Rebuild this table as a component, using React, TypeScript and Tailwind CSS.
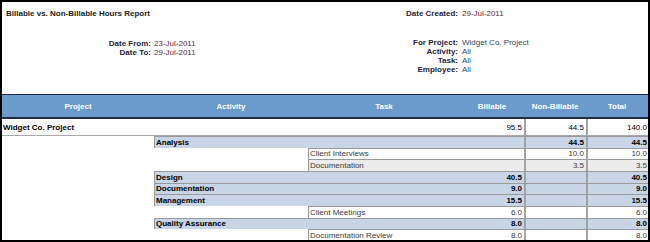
import React from "react";

interface Row {
  level: 1 | 2;
  name: string;
  billable: string;
  nonBillable: string;
  total: string;
  alt?: boolean;
}

const rows: Row[] = [
  { level: 1, name: "Analysis", billable: "", nonBillable: "44.5", total: "44.5" },
  { level: 2, name: "Client Interviews", billable: "", nonBillable: "10.0", total: "10.0" },
  { level: 2, name: "Documentation", billable: "", nonBillable: "3.5", total: "3.5", alt: true },
  { level: 1, name: "Design", billable: "40.5", nonBillable: "", total: "40.5" },
  { level: 1, name: "Documentation", billable: "9.0", nonBillable: "", total: "9.0" },
  { level: 1, name: "Management", billable: "15.5", nonBillable: "", total: "15.5" },
  { level: 2, name: "Client Meetings", billable: "6.0", nonBillable: "", total: "6.0" },
  { level: 1, name: "Quality Assurance", billable: "8.0", nonBillable: "", total: "8.0" },
  { level: 2, name: "Documentation Review", billable: "8.0", nonBillable: "", total: "8.0" },
];

function Field({ label, value, tone }: { label: string; value: string; tone: "date" | "info" }) {
  return (
    <>
      <div className="text-right font-bold text-[#1f2338]">{label}</div>
      <div className={tone === "date" ? "text-[#5c2a3a]" : "text-[#2d4763]"}>{value}</div>
    </>
  );
}

function DetailRow({ row }: { row: Row }) {
  const activity = row.level === 1;
  return (
    <div className="flex h-[11.67px]">
      <div className={row.level === 1 ? "w-[152px] shrink-0" : "w-[306px] shrink-0"} />
      <div
        className={`flex flex-1 border-t border-l border-[#9a9a9a] ${
          activity ? "bg-[#c8d5e6] font-bold text-black" : row.alt ? "bg-[#ececec] text-[#3a3a3a]" : "bg-white text-[#3a3a3a]"
        }`}
      >
        <div className="flex flex-1 items-center pl-[1px]">{row.name}</div>
        <div className="flex w-[64px] items-center justify-end pr-[2px]">{row.billable}</div>
        <div className="flex w-[62px] items-center justify-end border-l-2 border-[#a3a3a3] pr-[2px]">{row.nonBillable}</div>
        <div className="flex w-[62px] items-center justify-end border-l-2 border-[#a3a3a3] pr-[1px]">{row.total}</div>
      </div>
    </div>
  );
}

export default function App() {
  return (
    <div className="w-[650px] h-[242px] overflow-hidden border-2 border-black bg-white font-['Liberation_Sans',Arial,sans-serif] text-[8px] leading-[9px]">
      {/* Report heading */}
      <div className="h-[92px] pt-[7px]">
        <div className="flex">
          <div className="w-[330px] pl-[4px] font-bold text-[#1a1a1a]">Billable vs. Non-Billable Hours Report</div>
          <div className="grid grid-cols-[126px_auto] gap-x-[4px]">
            <Field label="Date Created:" value="29-Jul-2011" tone="date" />
          </div>
        </div>
        <div className="mt-[20px] flex items-start">
          <div className="mt-[1px] grid w-[330px] grid-cols-[149px_auto] gap-x-[3px]">
            <Field label="Date From:" value="23-Jul-2011" tone="date" />
            <Field label="Date To:" value="29-Jul-2011" tone="date" />
          </div>
          <div className="grid grid-cols-[126px_auto] gap-x-[4px]">
            <Field label="For Project:" value="Widget Co. Project" tone="info" />
            <Field label="Activity:" value="All" tone="info" />
            <Field label="Task:" value="All" tone="info" />
            <Field label="Employee:" value="All" tone="info" />
          </div>
        </div>
      </div>

      {/* Column headers */}
      <div className="flex h-[25px] border-t border-b-2 border-[#1e2b4a] bg-[#6b9acb] font-bold text-white">
        <div className="flex w-[152px] items-center justify-center">Project</div>
        <div className="flex w-[154px] items-center justify-center">Activity</div>
        <div className="flex w-[152px] items-center justify-center">Task</div>
        <div className="flex w-[64px] items-center justify-center">Billable</div>
        <div className="flex w-[62px] items-center justify-center">Non-Billable</div>
        <div className="flex w-[62px] items-center justify-center">Total</div>
      </div>

      {/* Project total */}
      <div className="flex h-[17px] border-b border-[#a8a8a8] text-black">
        <div className="flex w-[458px] items-center pl-[1px] font-bold">Widget Co. Project</div>
        <div className="flex w-[64px] items-center justify-end pr-[2px]">95.5</div>
        <div className="flex w-[62px] items-center justify-end border-l-2 border-[#a3a3a3] pr-[2px]">44.5</div>
        <div className="flex w-[62px] items-center justify-end border-l-2 border-[#a3a3a3] pr-[1px]">140.0</div>
      </div>

      {rows.map((row, i) => (
        <DetailRow key={i} row={row} />
      ))}
    </div>
  );
}
